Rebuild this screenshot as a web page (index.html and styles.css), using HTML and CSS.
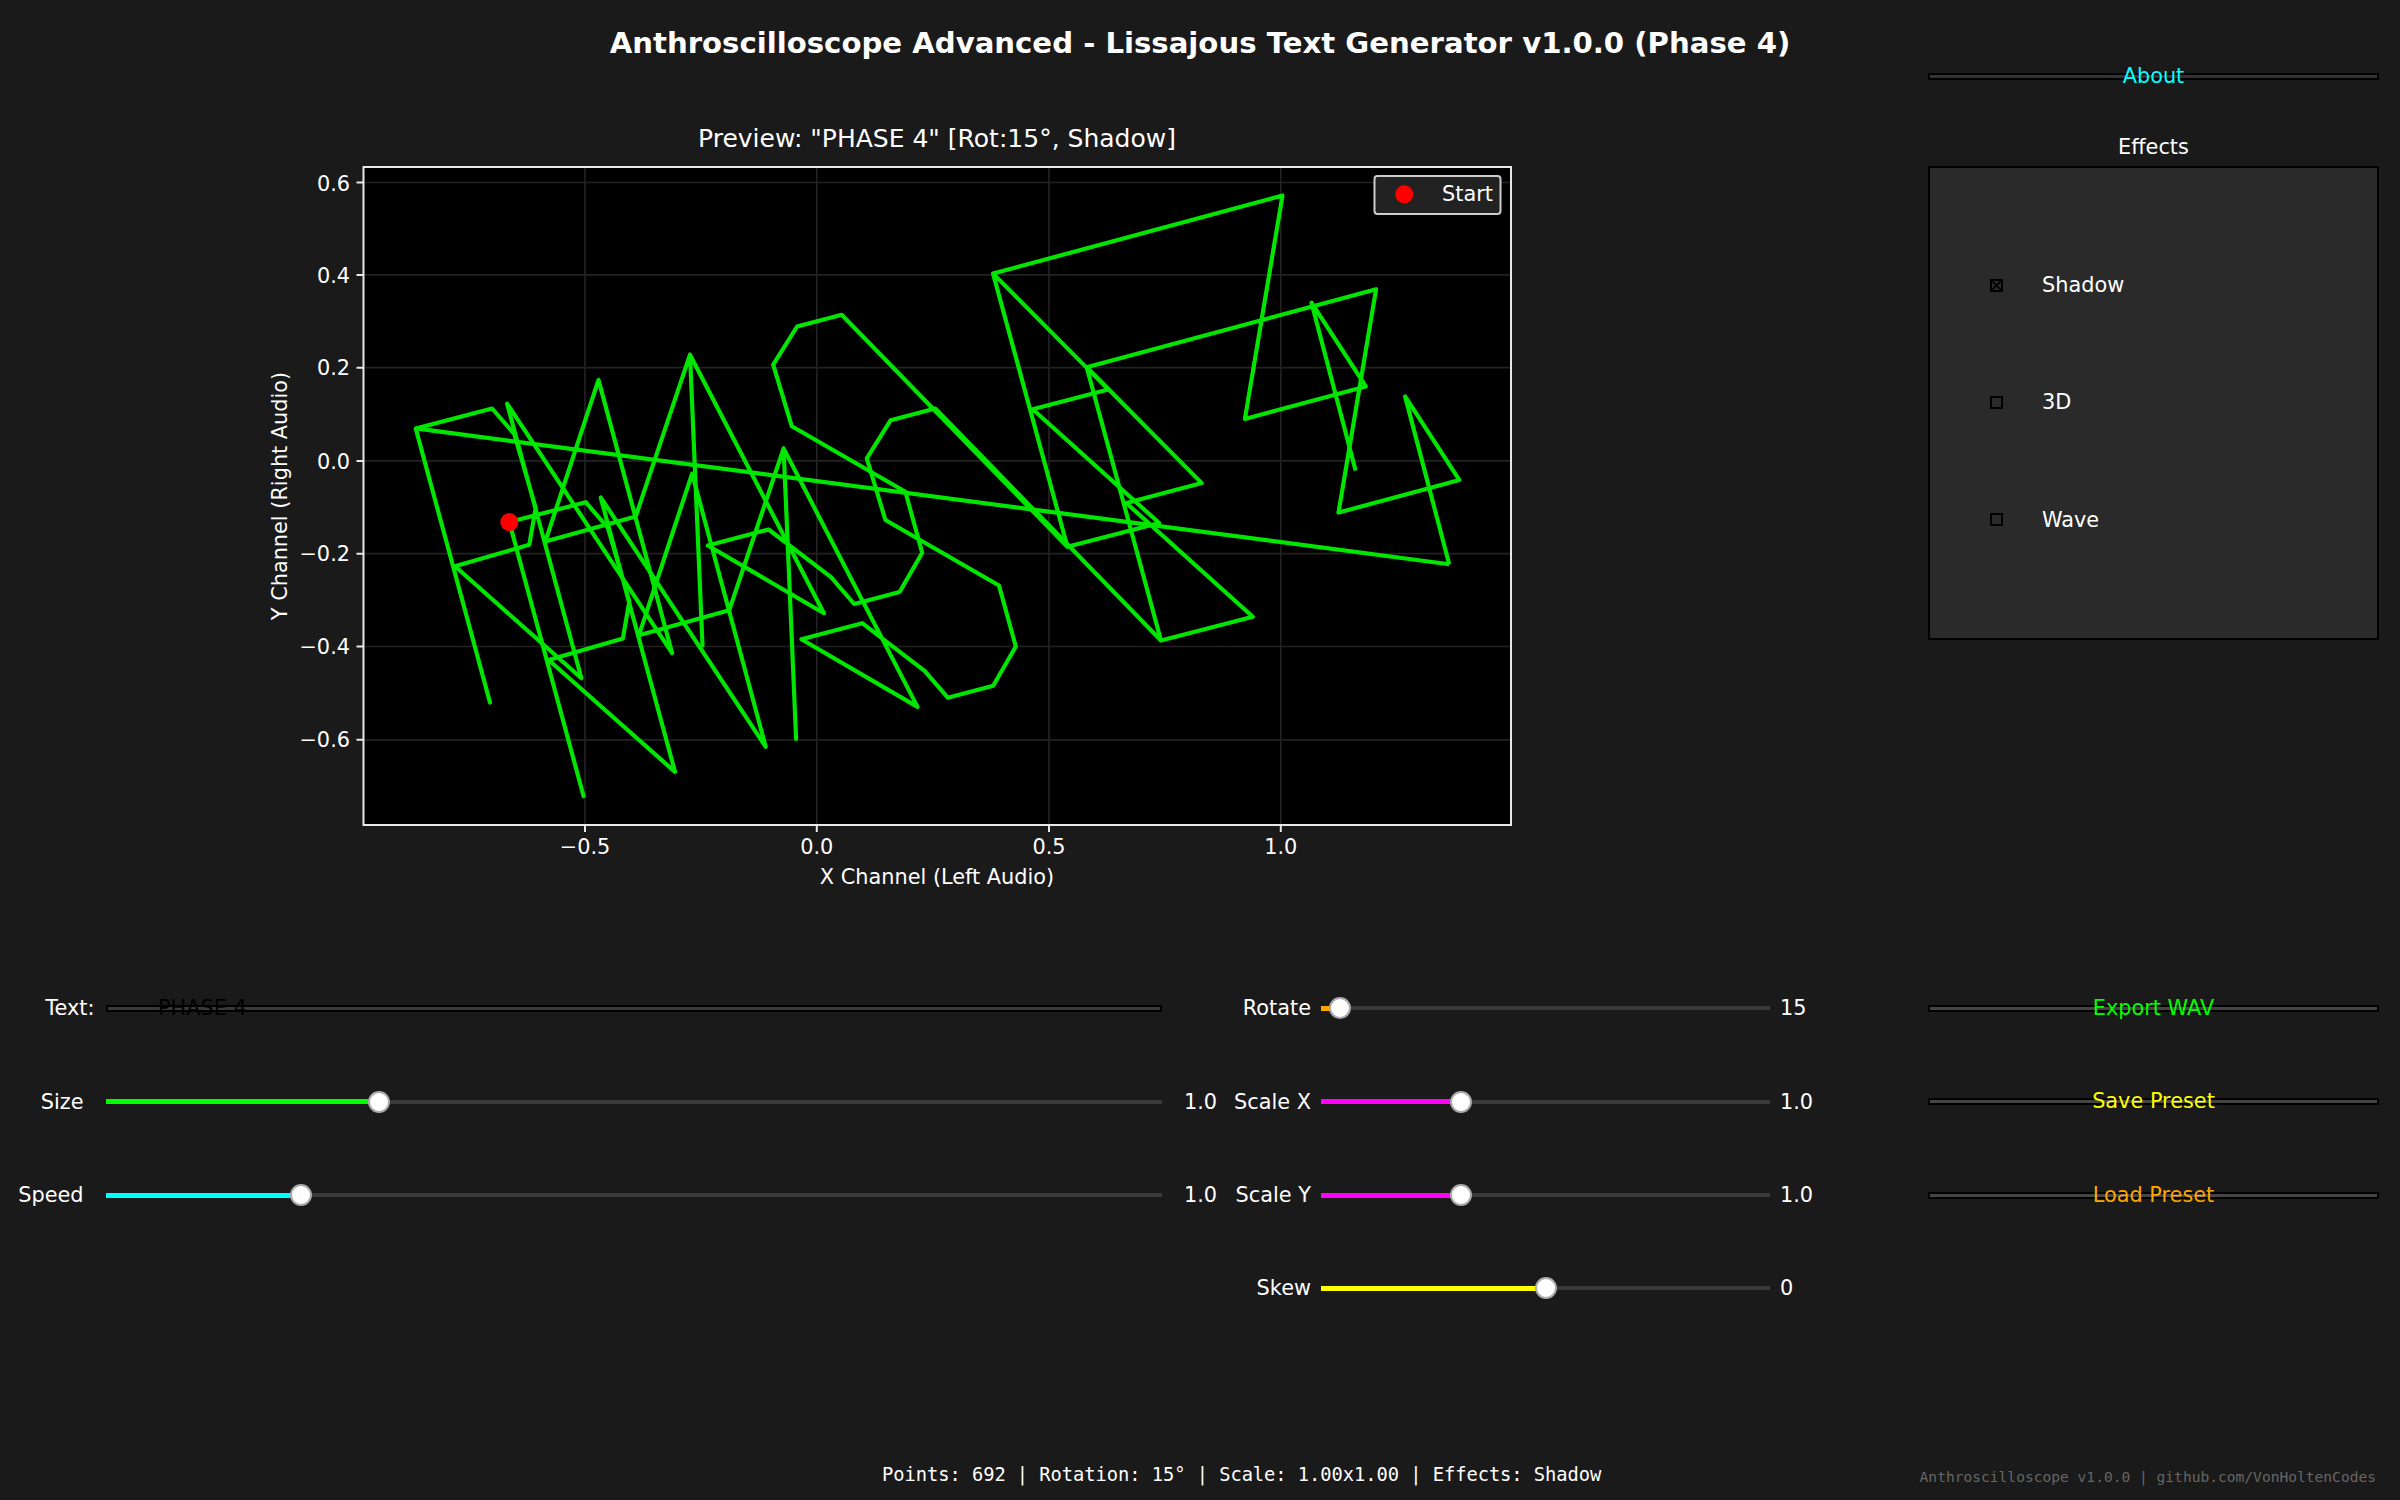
FILE: index.html
```html
<!DOCTYPE html>
<html lang="en">
<head>
    <meta charset="UTF-8">
    <meta name="viewport" content="width=device-width, initial-scale=1.0">
    <title>Anthroscilloscope Advanced</title>
    <link rel="stylesheet" href="styles.css">
</head>
<body>
    <div class="page">
        <h1 class="app-title">Anthroscilloscope Advanced - Lissajous Text Generator v1.0.0 (Phase 4)</h1>

        <main class="main-row">
            <!-- viewBox is in page pixels, so the plot numbers read directly off the screenshot -->
            <svg class="plot" viewBox="240 60 1290 840" width="1290" height="840">
                <text class="plot-title" x="937" y="147">Preview: "PHASE 4" [Rot:15°, Shadow]</text>
                <rect class="axes-bg" x="363.5" y="167" width="1147.5" height="658"/>

                <g class="grid-lines">
                    <path d="M585 167V825M816.8 167V825M1049 167V825M1280.8 167V825"/>
                    <path d="M363.5 182.5H1511M363.5 274.9H1511M363.5 367.7H1511M363.5 460.9H1511M363.5 553.7H1511M363.5 646.5H1511M363.5 739.8H1511"/>
                </g>

                <polyline id="glyphs" class="trace" points="415.7,428.4 490,702.5 415.7,428.4 492.1,408.5 514.3,434.1 535.7,507.8 529.3,544.7 455,566.3 581.4,678.2 507.1,403.7 672.1,653.1 598.5,379.9 545.3,541.6 635.7,516.5 690,354.7 702.5,645.3 690,354.7 823.9,613.2 707.8,545.5 768.6,529.5 831,577.2 854.2,604 899.6,592 922.2,552.8 905.4,491.8 791.8,426.3 773.2,364.7 797.1,326.5 841.7,314.8 1067.4,546.8 993.1,273.6 1067.4,546.8 1159.2,523 1032.7,409.3 1108.2,389.4 993.1,273.6 1282.5,195.5 1244.9,418.9 1365.8,386.4 1311.5,302.7 1355.6,470.5"/>
                <use href="#glyphs" x="93.6" y="93.7"/>
                <line class="trace" x1="1449.2" y1="564.2" x2="415.7" y2="428.4"/>
                <circle class="start-dot" cx="509.3" cy="522.1" r="9"/>

                <rect class="axes-frame" x="363.5" y="167" width="1147.5" height="658"/>
                <path class="tick-marks" d="M585 825v7M816.8 825v7M1049 825v7M1280.8 825v7M363.5 182.5h-7M363.5 274.9h-7M363.5 367.7h-7M363.5 460.9h-7M363.5 553.7h-7M363.5 646.5h-7M363.5 739.8h-7"/>

                <g class="tick-labels-x">
                    <text x="585" y="854">−0.5</text>
                    <text x="816.8" y="854">0.0</text>
                    <text x="1049" y="854">0.5</text>
                    <text x="1280.8" y="854">1.0</text>
                </g>
                <g class="tick-labels-y">
                    <text x="350" y="190.5">0.6</text>
                    <text x="350" y="282.5">0.4</text>
                    <text x="350" y="375.3">0.2</text>
                    <text x="350" y="468.5">0.0</text>
                    <text x="350" y="561.3">−0.2</text>
                    <text x="350" y="654">−0.4</text>
                    <text x="350" y="747.4">−0.6</text>
                </g>
                <text class="axis-label" x="937" y="884">X Channel (Left Audio)</text>
                <text class="axis-label" transform="translate(287 496) rotate(-90)">Y Channel (Right Audio)</text>

                <rect class="legend-box" x="1374.5" y="176" width="126" height="38" rx="3"/>
                <circle class="start-dot" cx="1404.3" cy="194.3" r="9"/>
                <text class="legend-text" x="1442" y="200.5">Start</text>
            </svg>

            <aside class="side-col">
                <a class="btn btn-about">About</a>
                <div class="panel-title">Effects</div>
                <div class="effects-panel">
                    <div class="effect-row">
                        <span class="check">
                            <svg viewBox="0 0 9 9" width="9" height="9"><path d="M0 0L9 9M9 0L0 9"/></svg>
                        </span>
                        <span>Shadow</span>
                    </div>
                    <div class="effect-row"><span class="check"></span><span>3D</span></div>
                    <div class="effect-row"><span class="check"></span><span>Wave</span></div>
                </div>
            </aside>
        </main>

        <section class="controls">
            <div class="col-left">
                <div class="ctl-row">
                    <label class="ctl-label label-text">Text:</label>
                    <div class="text-box"><span class="text-value">PHASE 4</span></div>
                </div>
                <div class="ctl-row">
                    <label class="ctl-label">Size</label>
                    <div class="slider"><div class="fill fill-green" style="width:25.9%"><i class="thumb"></i></div></div>
                    <span class="ctl-value">1.0</span>
                </div>
                <div class="ctl-row">
                    <label class="ctl-label">Speed</label>
                    <div class="slider"><div class="fill fill-cyan" style="width:18.44%"><i class="thumb"></i></div></div>
                    <span class="ctl-value">1.0</span>
                </div>
            </div>

            <div class="col-mid">
                <div class="ctl-row">
                    <label class="ctl-label">Rotate</label>
                    <div class="slider"><div class="fill fill-orange" style="width:4.3%"><i class="thumb"></i></div></div>
                    <span class="ctl-value">15</span>
                </div>
                <div class="ctl-row">
                    <label class="ctl-label">Scale X</label>
                    <div class="slider"><div class="fill fill-magenta" style="width:31.26%"><i class="thumb"></i></div></div>
                    <span class="ctl-value">1.0</span>
                </div>
                <div class="ctl-row">
                    <label class="ctl-label">Scale Y</label>
                    <div class="slider"><div class="fill fill-magenta" style="width:31.26%"><i class="thumb"></i></div></div>
                    <span class="ctl-value">1.0</span>
                </div>
                <div class="ctl-row">
                    <label class="ctl-label">Skew</label>
                    <div class="slider"><div class="fill fill-yellow" style="width:50.1%"><i class="thumb"></i></div></div>
                    <span class="ctl-value">0</span>
                </div>
            </div>

            <div class="col-buttons">
                <div class="ctl-row"><a class="btn btn-export">Export WAV</a></div>
                <div class="ctl-row"><a class="btn btn-save">Save Preset</a></div>
                <div class="ctl-row"><a class="btn btn-load">Load Preset</a></div>
            </div>
        </section>

        <footer class="status-bar">
            <span class="status-text">Points: 692 | Rotation: 15° | Scale: 1.00x1.00 | Effects: Shadow</span>
            <span class="credit">Anthroscilloscope v1.0.0 | github.com/VonHoltenCodes</span>
        </footer>
    </div>
</body>
</html>
```

FILE: styles.css
```css
* {
    box-sizing: border-box;
}

body {
    margin: 0;
    background-color: #1a1a1a;
    color: #fff;
    font-family: "DejaVu Sans", sans-serif;
    font-size: 20.83px;
}

.page {
    width: 2400px;
    height: 1500px;
    display: flex;
    flex-direction: column;
}

.app-title {
    margin: 0;
    height: 60px;
    padding-top: 26px;
    line-height: 34px;
    font-size: 29.17px;
    font-weight: bold;
    text-align: center;
    white-space: nowrap;
}

/* Top row: plot + effects */
.main-row {
    height: 901.7px;
    padding-left: 240px;
    display: grid;
    grid-template-columns: 1688px 451px;
    align-items: start;
}

.plot {
    display: block;
}

.plot text {
    fill: #fff;
    font-family: "DejaVu Sans", sans-serif;
    font-size: 20.83px;
}

.plot .plot-title {
    font-size: 25px;
    text-anchor: middle;
}

.axes-bg {
    fill: #000;
}

.grid-lines path {
    fill: none;
    stroke: #222;
    stroke-width: 1.7;
}

.trace,
.plot use {
    fill: none;
    stroke: #00e600;
    stroke-width: 4.17;
    stroke-linejoin: round;
}

.start-dot {
    fill: #f00;
}

.axes-frame {
    fill: none;
    stroke: #e8e8e8;
    stroke-width: 2;
}

.tick-marks {
    fill: none;
    stroke: #e8e8e8;
    stroke-width: 2;
}

.tick-labels-x text,
.axis-label {
    text-anchor: middle;
}

.tick-labels-y text {
    text-anchor: end;
}

.legend-box {
    fill: #222;
    stroke: #ccc;
    stroke-width: 2;
}

/* Sidebar */
.side-col {
    display: flex;
    flex-direction: column;
}

.btn {
    display: block;
    height: 7px;
    border: 2px solid #000;
    background-color: #444;
    line-height: 3px;
    text-align: center;
    white-space: nowrap;
}

.btn-about {
    margin-top: 13px;
    background-color: #333;
    color: #0ff;
}

.btn-export {
    color: #0f0;
}

.btn-save {
    color: #ff0;
}

.btn-load {
    color: #ffa500;
}

.col-buttons .btn {
    width: 100%;
}

.panel-title {
    margin-top: 55px;
    margin-bottom: 7px;
    line-height: 24px;
    text-align: center;
}

.effects-panel {
    height: 474px;
    padding: 58.5px 0 59.5px;
    display: flex;
    flex-direction: column;
    background-color: #2a2a2a;
    border: 2px solid #000;
}

.effect-row {
    flex: 1;
    display: flex;
    align-items: center;
    padding-left: 60px;
}

.check {
    width: 13px;
    height: 13px;
    margin-right: 39px;
    border: 2px solid #000;
    display: flex;
}

.check svg {
    display: block;
}

.check path {
    fill: none;
    stroke: #000;
    stroke-width: 1.6;
}

/* Sliders and buttons */
.controls {
    height: 374px;
    display: flex;
    align-items: flex-start;
}

.col-left {
    width: 1200px;
}

.col-mid {
    width: 640px;
}

.col-buttons {
    width: 451px;
    margin-left: 88px;
}

.ctl-row {
    height: 93.33px;
    display: flex;
    align-items: center;
}

.ctl-label {
    flex: none;
    text-align: right;
    white-space: nowrap;
}

.col-left .ctl-label {
    width: 83.5px;
    margin-right: 22.5px;
}

.col-left .label-text {
    width: 94.5px;
    margin-right: 11.5px;
}

.col-mid .ctl-label {
    width: 111px;
    margin-right: 10px;
}

.slider {
    position: relative;
    flex: none;
    height: 4px;
    background-color: #3a3a3a;
}

.col-left .slider,
.text-box {
    width: 1055.6px;
}

.col-mid .slider {
    width: 448.5px;
}

.col-left .ctl-value {
    margin-left: 22.4px;
}

.col-mid .ctl-value {
    margin-left: 10.5px;
}

.fill {
    position: absolute;
    left: 0;
    top: -0.5px;
    height: 5px;
}

.fill-green { background-color: #0f0; }
.fill-cyan { background-color: #0ff; }
.fill-orange { background-color: #ffa500; }
.fill-magenta { background-color: #f0f; }
.fill-yellow { background-color: #ff0; }

.thumb {
    position: absolute;
    right: -11px;
    top: -8.5px;
    width: 22px;
    height: 22px;
    border-radius: 50%;
    background-color: #fff;
    border: 2px solid #aaa;
}

.text-box {
    height: 7px;
    border: 2px solid #000;
    background-color: #3a3a3a;
    line-height: 3px;
    padding-left: 50px;
    white-space: nowrap;
}

.text-value {
    color: #000;
}

/* Bottom line */
.status-bar {
    flex: 1;
    display: flex;
    justify-content: space-between;
    align-items: flex-end;
    padding: 0 24px 15px 882px;
}

.status-text {
    font-family: "DejaVu Sans Mono", monospace;
    font-size: 18.75px;
    letter-spacing: -0.05px;
}

.credit {
    font-family: "DejaVu Sans Mono", monospace;
    font-size: 14.58px;
    color: #666;
}
```
